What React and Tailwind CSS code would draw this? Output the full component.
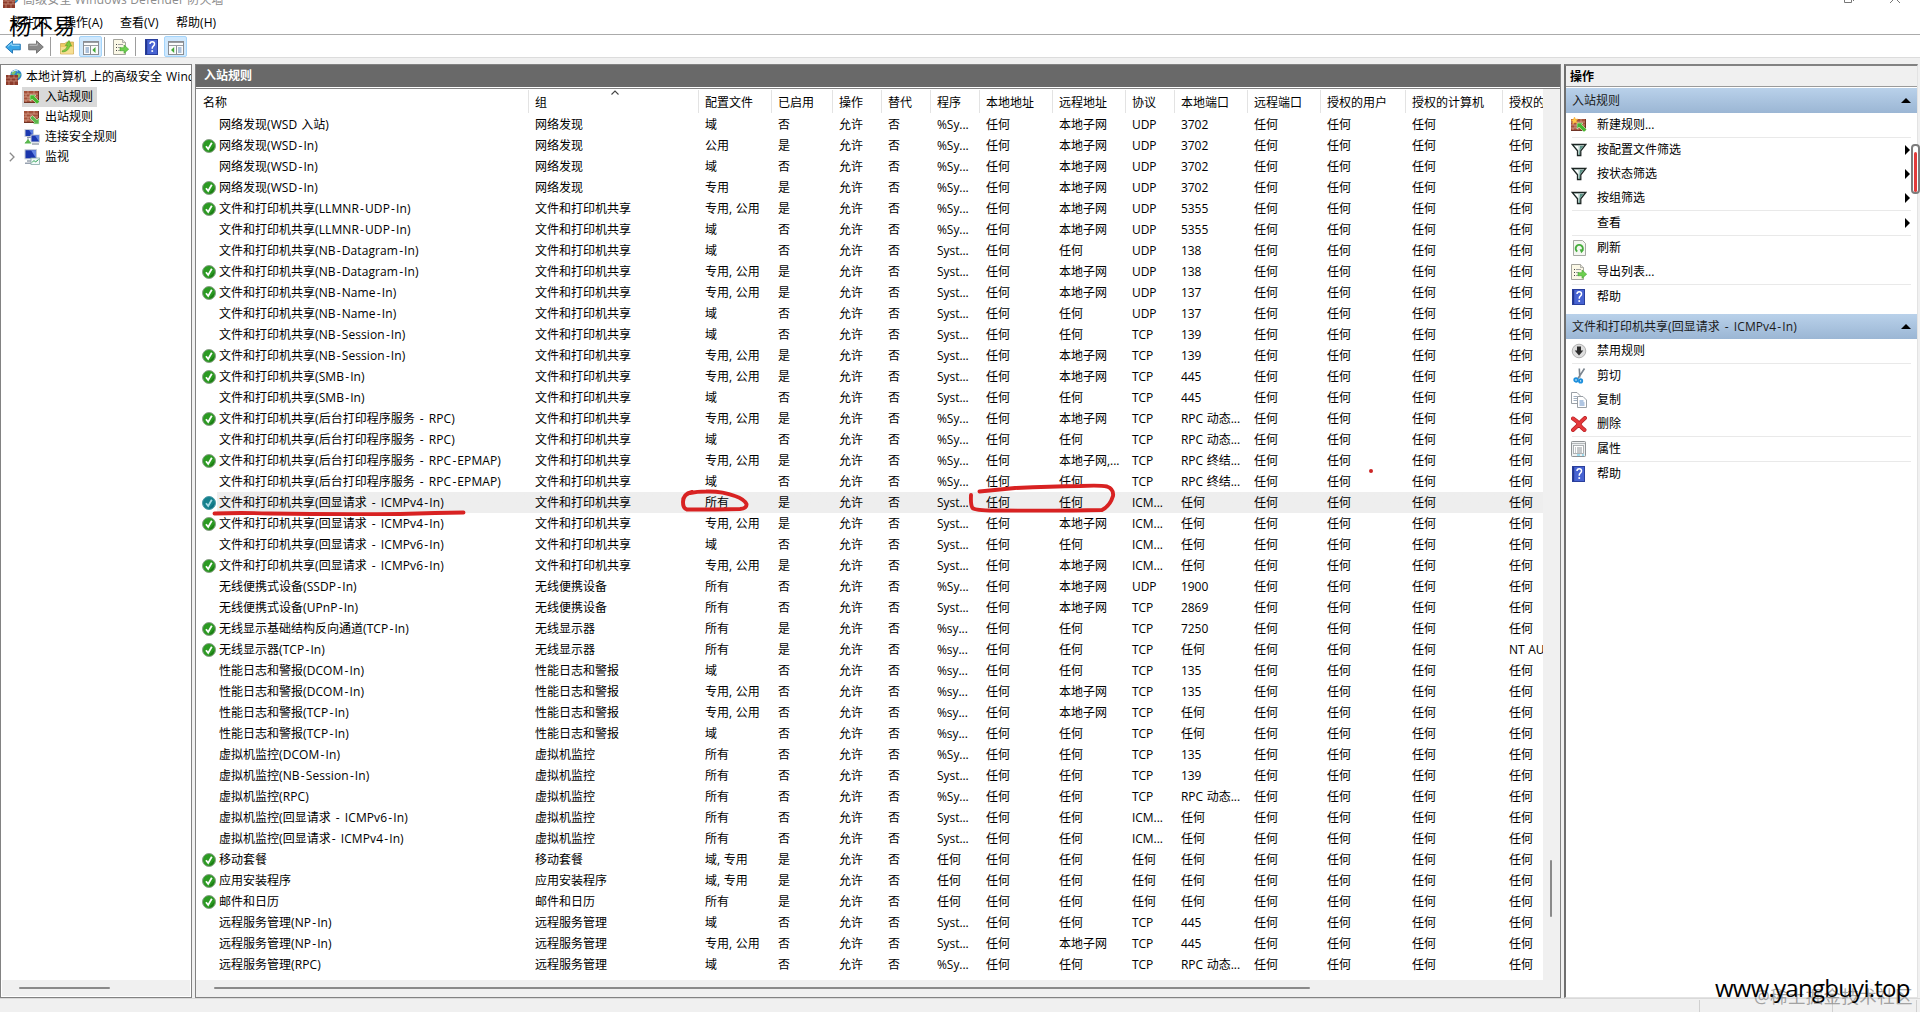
import React from 'react';
import clsx from 'clsx';

const FILES = '文件和打印机共享';
const PERF = '性能日志和警报';
const VM = '虚拟机监控';
const ANY = '任何';
const SUBNET = '本地子网';
const BOTH = '专用, 公用';

// name, group, profile, enabled, program, remote address, protocol, local port, authorized
const RULES = [
  ['网络发现(WSD 入站)', '网络发现', '域', 0, '%Sy...', SUBNET, 'UDP', '3702'],
  ['网络发现(WSD-In)', '网络发现', '公用', 1, '%Sy...', SUBNET, 'UDP', '3702'],
  ['网络发现(WSD-In)', '网络发现', '域', 0, '%Sy...', SUBNET, 'UDP', '3702'],
  ['网络发现(WSD-In)', '网络发现', '专用', 1, '%Sy...', SUBNET, 'UDP', '3702'],
  [`${FILES}(LLMNR-UDP-In)`, FILES, BOTH, 1, '%Sy...', SUBNET, 'UDP', '5355'],
  [`${FILES}(LLMNR-UDP-In)`, FILES, '域', 0, '%Sy...', SUBNET, 'UDP', '5355'],
  [`${FILES}(NB-Datagram-In)`, FILES, '域', 0, 'Syst...', ANY, 'UDP', '138'],
  [`${FILES}(NB-Datagram-In)`, FILES, BOTH, 1, 'Syst...', SUBNET, 'UDP', '138'],
  [`${FILES}(NB-Name-In)`, FILES, BOTH, 1, 'Syst...', SUBNET, 'UDP', '137'],
  [`${FILES}(NB-Name-In)`, FILES, '域', 0, 'Syst...', ANY, 'UDP', '137'],
  [`${FILES}(NB-Session-In)`, FILES, '域', 0, 'Syst...', ANY, 'TCP', '139'],
  [`${FILES}(NB-Session-In)`, FILES, BOTH, 1, 'Syst...', SUBNET, 'TCP', '139'],
  [`${FILES}(SMB-In)`, FILES, BOTH, 1, 'Syst...', SUBNET, 'TCP', '445'],
  [`${FILES}(SMB-In)`, FILES, '域', 0, 'Syst...', ANY, 'TCP', '445'],
  [`${FILES}(后台打印程序服务 - RPC)`, FILES, BOTH, 1, '%Sy...', SUBNET, 'TCP', 'RPC 动态...'],
  [`${FILES}(后台打印程序服务 - RPC)`, FILES, '域', 0, '%Sy...', ANY, 'TCP', 'RPC 动态...'],
  [`${FILES}(后台打印程序服务 - RPC-EPMAP)`, FILES, BOTH, 1, '%Sy...', '本地子网,...', 'TCP', 'RPC 终结...'],
  [`${FILES}(后台打印程序服务 - RPC-EPMAP)`, FILES, '域', 0, '%Sy...', ANY, 'TCP', 'RPC 终结...'],
  [`${FILES}(回显请求 - ICMPv4-In)`, FILES, '所有', 1, 'Syst...', ANY, 'ICM...', ANY],
  [`${FILES}(回显请求 - ICMPv4-In)`, FILES, BOTH, 1, 'Syst...', SUBNET, 'ICM...', ANY],
  [`${FILES}(回显请求 - ICMPv6-In)`, FILES, '域', 0, 'Syst...', ANY, 'ICM...', ANY],
  [`${FILES}(回显请求 - ICMPv6-In)`, FILES, BOTH, 1, 'Syst...', SUBNET, 'ICM...', ANY],
  ['无线便携式设备(SSDP-In)', '无线便携设备', '所有', 0, '%Sy...', SUBNET, 'UDP', '1900'],
  ['无线便携式设备(UPnP-In)', '无线便携设备', '所有', 0, 'Syst...', SUBNET, 'TCP', '2869'],
  ['无线显示基础结构反向通道(TCP-In)', '无线显示器', '所有', 1, '%sy...', ANY, 'TCP', '7250'],
  ['无线显示器(TCP-In)', '无线显示器', '所有', 1, '%sy...', ANY, 'TCP', ANY, 'NT AUTHORITY'],
  [`${PERF}(DCOM-In)`, PERF, '域', 0, '%sy...', ANY, 'TCP', '135'],
  [`${PERF}(DCOM-In)`, PERF, BOTH, 0, '%sy...', SUBNET, 'TCP', '135'],
  [`${PERF}(TCP-In)`, PERF, BOTH, 0, '%sy...', SUBNET, 'TCP', ANY],
  [`${PERF}(TCP-In)`, PERF, '域', 0, '%sy...', ANY, 'TCP', ANY],
  [`${VM}(DCOM-In)`, VM, '所有', 0, '%Sy...', ANY, 'TCP', '135'],
  [`${VM}(NB-Session-In)`, VM, '所有', 0, 'Syst...', ANY, 'TCP', '139'],
  [`${VM}(RPC)`, VM, '所有', 0, '%Sy...', ANY, 'TCP', 'RPC 动态...'],
  [`${VM}(回显请求 - ICMPv6-In)`, VM, '所有', 0, 'Syst...', ANY, 'ICM...', ANY],
  [`${VM}(回显请求- ICMPv4-In)`, VM, '所有', 0, 'Syst...', ANY, 'ICM...', ANY],
  ['移动套餐', '移动套餐', '域, 专用', 1, ANY, ANY, ANY, ANY],
  ['应用安装程序', '应用安装程序', '域, 专用', 1, ANY, ANY, ANY, ANY],
  ['邮件和日历', '邮件和日历', '所有', 1, ANY, ANY, ANY, ANY],
  ['远程服务管理(NP-In)', '远程服务管理', '域', 0, 'Syst...', ANY, 'TCP', '445'],
  ['远程服务管理(NP-In)', '远程服务管理', BOTH, 0, 'Syst...', SUBNET, 'TCP', '445'],
  ['远程服务管理(RPC)', '远程服务管理', '域', 0, '%Sy...', ANY, 'TCP', 'RPC 动态...'],
];
const SELECTED = 18;

const HEADERS = ['名称', '组', '配置文件', '已启用', '操作', '替代', '程序', '本地地址', '远程地址', '协议', '本地端口', '远程端口', '授权的用户', '授权的计算机', '授权的本地主体'];
const GRID = 'grid grid-cols-[332px_170px_73px_61px_49px_49px_49px_73px_73px_49px_73px_73px_85px_97px_40px]';

// Latin runs get their own tracking, and hyphens a bit of air on both sides
function T({ children, wide }) {
  return children.split(/([\x20-\x2c\x2e-\x7e]+|-)/).map((part, i) => {
    if (i % 2 === 0) return part;
    if (part === '-') return <span key={i} className="px-[1.1px]">-</span>;
    return <span key={i} className={wide ? 'tracking-[0.1px] [word-spacing:0.8px]' : 'tracking-[-0.05px] [word-spacing:0.6px]'}>{part}</span>;
  });
}

function Svg({ children, className }) {
  return <svg viewBox="0 0 16 16" className={clsx('block size-4 shrink-0', className)}>{children}</svg>;
}

function CheckIcon({ selected }) {
  return (
    <svg viewBox="0 0 14 14" className="block size-[14px] shrink-0">
      <circle cx="7" cy="7" r="6.5" fill={selected ? '#14808c' : '#2b9a22'} stroke={selected ? '#4c9aa8' : '#8aa088'} strokeWidth="1" />
      <path d="M7 12.6A5.6 5.6 0 0 0 12.4 7Q10 9 7 12.6Z" fill={selected ? '#0c6b80' : '#1c7c14'} />
      <path d="M4 7.2L6.2 10L9.8 3.8" fill="none" stroke={selected ? '#a8dbe6' : '#fff'} strokeWidth="1.8" />
    </svg>
  );
}

function Bricks({ x = 0, y = 2, w = 15, h = 12 }) {
  return (
    <>
      <rect x={x} y={y} width={w} height={h} fill="#a4513a" />
      <path d={`M${x} ${y + 3}h${w}M${x} ${y + 6}h${w}M${x} ${y + 9}h${w}M${x + 4} ${y}v3M${x + 10} ${y}v3M${x + 2} ${y + 3}v3M${x + 7} ${y + 3}v3M${x + 4} ${y + 6}v3M${x + 10} ${y + 6}v3M${x + 2} ${y + 9}v3M${x + 7} ${y + 9}v3`} stroke="#d9a692" strokeWidth="0.7" />
      <path d={`M${x} ${y + h - 0.5}h${w}M${x + w - 0.5} ${y}v${h}`} stroke="#6f3426" />
    </>
  );
}

function FirewallIcon() {
  return (
    <Svg>
      <circle cx="10" cy="6" r="5.6" fill="#2d86c8" />
      <path d="M7 2Q9 1 10 3L8 6L5 5ZM11 4L15 5L13 9L11 8Z" fill="#7cc46a" />
      <path d="M6 3Q9 0 12 2" stroke="#d4efff" fill="none" />
      <rect y="6" width="12" height="10" fill="#8d3b2b" />
      <path d="M0 9h12M0 12h12M3 6v3M8 6v3M5 9v3M10 9v3M3 12v4M8 12v4" stroke="#cf9582" strokeWidth="0.7" />
    </Svg>
  );
}

function InboundIcon({ fresh }) {
  return (
    <Svg>
      <Bricks />
      <path d="M6 6H12L10.500 7.500L15.500 12.500L13 15L8 10L6 12Z" fill="#45b931" stroke="#d6f5cd" strokeWidth="0.6" />
      {fresh && <path d="M3.500 0L4.500 2.300L7 2L5.300 4L6.500 6.300L4 5.500L1.800 7L2 4.500L0 3L2.500 2.300Z" fill="#ffc94a" stroke="#f49b20" strokeWidth="0.4" />}
    </Svg>
  );
}

function OutboundIcon() {
  return (
    <Svg>
      <Bricks />
      <path d="M15 15H9L10.500 13.500L6 9L8.500 6.500L13 11L15 9Z" fill="#5cb84c" stroke="#dff5d8" strokeWidth="0.6" />
    </Svg>
  );
}

function ConnectionIcon() {
  return (
    <Svg>
      <rect x="1" y="0.500" width="8.500" height="7" fill="#1c39b0" stroke="#c4cbd6" />
      <path d="M5 1h4v6Z" fill="#5b7ee0" />
      <path d="M3 8.500h5M1 13.500h6M4 9v4" stroke="#8d98a6" />
      <path d="M0.500 14.500L4 10L7.500 14.500Z" fill="#58b84c" />
      <rect x="7" y="6" width="8.500" height="7" fill="#1c39b0" stroke="#c4cbd6" />
      <path d="M11 6.500h4v6Z" fill="#5b7ee0" />
      <path d="M8 15h7" stroke="#9aa3ae" strokeWidth="1.500" />
    </Svg>
  );
}

function MonitorIcon() {
  return (
    <Svg>
      <rect x="1" y="0.800" width="11.500" height="9" fill="#1b36ac" stroke="#c0c8d4" />
      <path d="M7 1.300h5v8Z" fill="#6687e4" />
      <path d="M3 12h7M1 14.300h7" stroke="#98a2b0" strokeWidth="1.400" />
      <rect x="7" y="9" width="8.500" height="6.500" fill="#f2faf9" stroke="#86a9a6" strokeWidth="0.8" />
      <path d="M8 13.500L10 11.500L11.500 13L14.500 10.500" fill="none" stroke="#28a04c" />
    </Svg>
  );
}

function BackIcon() {
  return <Svg><path d="M0.700 8L7.500 1.800V5.200H15.300V10.800H7.500V14.200Z" fill="#38a5e6" stroke="#1b6fb0" strokeWidth="0.9" /><path d="M2.800 7.500L6.800 4V6.300H14.500" fill="none" stroke="#9fdcfa" /></Svg>;
}

function ForwardIcon() {
  return <Svg><path d="M15.300 8L8.500 1.800V5.200H0.700V10.800H8.500V14.200Z" fill="#8b8b8b" stroke="#6b6b6b" strokeWidth="0.9" /><path d="M1.500 6.300H9.300V4.200" fill="none" stroke="#bcbcbc" /></Svg>;
}

function FolderUpIcon() {
  return (
    <Svg>
      <path d="M1.500 4.500H6L7.500 3H14.500V15H1.500Z" fill="#ecc964" stroke="#c9a24a" strokeWidth="0.7" />
      <path d="M1.800 8H14.200V14.700H1.800Z" fill="#f6df92" />
      <path d="M3 12Q7.500 11 8.500 6.500H6.300L10 1.500L12.500 7H10.800Q9.500 12.500 3.500 13Z" fill="#7ccb3c" stroke="#4f9c26" strokeWidth="0.6" />
    </Svg>
  );
}

// console tree toggle has the narrow list on the left, the action pane toggle on the right
function PaneIcon({ flip }) {
  return (
    <Svg>
      <g transform={flip ? 'translate(16 0) scale(-1 1)' : undefined}>
        <rect x="0.500" y="2.500" width="15" height="13" fill="#fbfbfb" stroke="#8a8d92" />
        <path d="M1 3.500H15M1 6.500H15" stroke="#9b9ea3" />
        <path d="M7.500 7V15" stroke="#8a8d92" />
        <path d="M2.500 9H6M2.500 11H6M2.500 13H6" stroke="#5f87b8" />
        <path d={flip ? 'M13 11L9.800 8V14Z' : 'M9.300 11L12.500 8V14Z'} fill="#42aa35" />
      </g>
    </Svg>
  );
}

function ExportIcon() {
  return (
    <Svg>
      <path d="M0.500 0.500H9.500L12.500 3.500V15.500H0.500Z" fill="#fbf8e6" stroke="#9a9a92" strokeWidth="0.9" />
      <path d="M9.500 0.500V3.500H12.500" fill="#e3e3da" stroke="#9a9a92" strokeWidth="0.7" />
      <path d="M3 5.500h1M3 8.500h1M3 11.500h1" stroke="#444" />
      <path d="M5 5.500H10M5 8.500H8M5 11.500H8" stroke="#a0a0a0" />
      <path d="M7 8.700H11V6L15.700 10.200L11 14.400V11.700H7Z" fill="#6ed050" stroke="#42a62f" strokeWidth="0.6" />
    </Svg>
  );
}

function HelpIcon() {
  return (
    <Svg>
      <rect x="1.500" y="0.500" width="12" height="15" fill="#4763d2" stroke="#2a3f9c" />
      <path d="M2.500 1V15" stroke="#22368f" strokeWidth="1.400" />
      <path d="M6 5Q6 2.800 8.300 2.800T10.500 5Q10.500 6.300 9.300 7.200Q8.200 8 8.200 9.800" fill="none" stroke="#fff" strokeWidth="1.500" />
      <rect x="7.400" y="11.200" width="1.700" height="1.700" fill="#fff" />
    </Svg>
  );
}

function FilterIcon() {
  return (
    <Svg>
      <path d="M1.200 2.500H14.800L9.800 8.800V13.500H6.500V8.800Z" fill="#cfe3de" stroke="#1d2624" strokeWidth="1.300" />
      <path d="M9 4H12.500L9 8.500V13H8Z" fill="#5c9488" />
      <path d="M3.800 4H7L7.500 8Z" fill="#fff" />
    </Svg>
  );
}

function RefreshIcon() {
  return (
    <Svg>
      <path d="M2.500 0.500H11.500L14.500 3.500V15.500H2.500Z" fill="#f4f7f1" stroke="#9c9f9a" strokeWidth="0.9" />
      <path d="M6.300 11.500A3.600 3.600 0 1 1 10.800 11" fill="none" stroke="#45ad3c" strokeWidth="1.900" />
      <path d="M8.600 9.300L13 9.800L10.300 13.300Z" fill="#45ad3c" />
    </Svg>
  );
}

function DisableIcon() {
  return (
    <Svg>
      <circle cx="8" cy="8" r="6.800" fill="#dedede" stroke="#a3a3a3" strokeWidth="0.8" />
      <path d="M6 3.500H10V7.500H12.300L8 12.500L3.700 7.500H6Z" fill="#2c2c2c" />
    </Svg>
  );
}

function CutIcon() {
  return (
    <Svg>
      <path d="M13.500 0.500L7 10.500M8.300 0.500L8.800 9.500" stroke="#7b858f" strokeWidth="1.600" />
      <circle cx="5" cy="12" r="1.700" fill="none" stroke="#1c8fdc" strokeWidth="1.900" />
      <circle cx="9.600" cy="12.900" r="1.600" fill="none" stroke="#1c8fdc" strokeWidth="1.900" />
    </Svg>
  );
}

function CopyIcon() {
  return (
    <Svg>
      <path d="M0.500 0.500H6L9 3.500V11.500H0.500Z" fill="#fff" stroke="#8f959c" strokeWidth="0.9" />
      <path d="M2.500 4.500H6M2.500 6.500H6M2.500 8.500H6" stroke="#8a9cb0" strokeWidth="0.8" />
      <path d="M6.500 4.500H12L15.500 8V15.500H6.500Z" fill="#fff" stroke="#8f959c" strokeWidth="0.9" />
      <path d="M8.500 9H12.500M8.500 11H13.500M8.500 13H13.500" stroke="#4f7fbe" strokeWidth="0.9" />
    </Svg>
  );
}

function DeleteIcon() {
  return (
    <Svg>
      <path d="M2 2.500Q6 5 8 8Q10.500 12 13.500 14M14 2Q10 5.500 8 8T2 14" fill="none" stroke="#b31e22" strokeWidth="4" strokeLinecap="round" />
      <path d="M2 2.500Q6 5 8 8Q10.500 12 13.500 14M14 2Q10 5.500 8 8T2 14" fill="none" stroke="#e5393c" strokeWidth="2.800" strokeLinecap="round" />
    </Svg>
  );
}

function PropsIcon() {
  return (
    <Svg>
      <rect x="0.500" y="0.500" width="14" height="15" rx="0.800" fill="#eef0f1" stroke="#8e9294" />
      <path d="M1 2.500H14" stroke="#b4b8ba" />
      <rect x="2.500" y="4.500" width="10" height="8" fill="#fff" stroke="#9ca1a4" strokeWidth="0.8" />
      <path d="M4 7h1M4 9h1M4 11h1M6 7H11M6 9H11M6 11H11" stroke="#7f868b" strokeWidth="0.9" />
      <path d="M6 14H9M11 14H13" stroke="#4fc4e8" />
    </Svg>
  );
}

function ToolSep({ className }) {
  return <div className={clsx('h-[19px] w-px shrink-0 bg-[#9d9d9d]', className)} />;
}

function TreeRow({ icon, label, active, expander }) {
  return (
    <div className="flex h-5 items-center">
      <div className="flex w-[21px] shrink-0 justify-center pl-px">
        {expander && (
          <svg viewBox="0 0 6 10" className="h-[10px] w-[6px]"><path d="M0.800 0.800L5 5L0.800 9.200" fill="none" stroke="#8a8a8a" strokeWidth="1.300" /></svg>
        )}
      </div>
      <div className={clsx('flex h-5 items-center gap-[5px] pl-[2px] pr-[4px]', active && 'bg-[#d9d9d9]')}>
        {icon}
        <span>{label}</span>
      </div>
    </div>
  );
}

function ActionHeader({ label }) {
  return (
    <div className="flex h-[25px] items-center justify-between bg-linear-to-b from-[#b9d1ea] to-[#9bb6d4] pl-[6px] pr-[6px] text-[#1b1b1b]">
      <span><T wide>{label}</T></span>
      <svg viewBox="0 0 10 5" className="h-[5px] w-[10px]"><path d="M5 0L10 5H0Z" fill="#000" /></svg>
    </div>
  );
}

function Action({ icon, label, arrow, line }) {
  return (
    <>
      <div className="flex h-6 items-center pl-[5px] pr-[7px]">
        <div className="w-[26px] shrink-0">{icon}</div>
        <span className="flex-1"><T>{label}</T></span>
        {arrow && <svg viewBox="0 0 5 10" className="h-[10px] w-[5px]"><path d="M0 0L5 5L0 10Z" fill="#000" /></svg>}
      </div>
      {line && <div className="ml-[6px] mr-[6px] h-px bg-[#e9e9e9]" />}
    </>
  );
}

function RuleRow({ rule, selected }) {
  const [name, group, profile, enabled, program, remote, proto, port, who] = rule;
  const cells = [group, profile, enabled ? '是' : '否', '允许', '否', program, ANY, remote, proto, port, ANY, ANY, ANY, who || ANY];
  return (
    <div className={clsx('h-[21px] items-center', GRID, selected && 'bg-linear-to-r from-transparent from-[20px] to-[#eeeeee] to-[20px]')}>
      <div className="flex items-center gap-[3px] pl-[5px]">
        <div className="w-[14px]">{enabled ? <CheckIcon selected={selected} /> : null}</div>
        <span className="whitespace-nowrap"><T wide>{name}</T></span>
      </div>
      {cells.map((c, i) => (
        <div key={i} className="overflow-hidden whitespace-nowrap pl-[6px]"><T>{c}</T></div>
      ))}
    </div>
  );
}

export default function App() {
  return (
    <div className="relative flex h-[1012px] w-[1920px] flex-col overflow-hidden bg-[#f0f0f0] font-['Open_Sans','Noto_Sans_CJK_SC',sans-serif] text-[12px] leading-[20px] text-black">
      {/* window caption, partly off screen */}
      <div className="flex h-3 shrink-0 items-start justify-between overflow-hidden bg-white">
        <div className="-mt-[10px] flex items-center gap-[4px] pl-[3px] text-[#8c8c8c]">
          <FirewallIcon />
          <span className="leading-[20px] tracking-[0.15px]">高级安全 Windows Defender 防火墙</span>
        </div>
        <div className="-mt-[7px] mr-[20px] flex gap-[36px]">
          <svg viewBox="0 0 10 10" className="size-[10px]"><path d="M0.500 2.500H7.500V9.500H0.500ZM2.500 0.500H9.500V8" fill="none" stroke="#777" /></svg>
          <svg viewBox="0 0 10 10" className="size-[10px]"><path d="M0 0L10 10M10 0L0 10" fill="none" stroke="#777" /></svg>
        </div>
      </div>

      <div className="flex h-[22px] shrink-0 items-center gap-4 bg-white pl-[10px]">
        <span className="w-[38px] whitespace-nowrap"><T wide>文件(F)</T></span>
        <span className="w-10 whitespace-nowrap"><T wide>操作(A)</T></span>
        <span className="w-10 whitespace-nowrap"><T wide>查看(V)</T></span>
        <span className="whitespace-nowrap"><T wide>帮助(H)</T></span>
      </div>

      <div className="flex h-6 shrink-0 items-center border-y border-t-[#ababab] border-b-[#dcdcdc] bg-white pl-[5px] pt-px">
        <BackIcon />
        <div className="ml-[7px]"><ForwardIcon /></div>
        <ToolSep className="ml-[6px]" />
        <div className="ml-[8px]"><FolderUpIcon /></div>
        <div className="ml-[4px] flex h-[21px] w-[23px] items-center justify-center rounded-[2px] border border-[#a5d5fb] bg-[#cfe8fd]"><PaneIcon flip={false} /></div>
        <ToolSep className="ml-[2px]" />
        <div className="ml-[8px]"><ExportIcon /></div>
        <ToolSep className="ml-[6px]" />
        <div className="ml-[8px]"><HelpIcon /></div>
        <div className="ml-[4px] flex h-[21px] w-[23px] items-center justify-center rounded-[2px] border border-[#a5d5fb] bg-[#cfe8fd]"><PaneIcon flip /></div>
      </div>

      <div className="flex h-[940px] shrink-0 gap-[3px] pt-[6px]">
        {/* console tree */}
        <div className="flex w-[192px] shrink-0 flex-col border border-[#828282] bg-white">
          <div className="flex-1 overflow-hidden pt-[2px]">
            <div className="flex h-5 items-center gap-[4px] pl-[5px]">
              <FirewallIcon />
              <span className="flex-1 overflow-hidden whitespace-nowrap"><T wide>本地计算机 上的高级安全 Windows Defender</T></span>
            </div>
            <TreeRow icon={<InboundIcon />} label="入站规则" active />
            <TreeRow icon={<OutboundIcon />} label="出站规则" />
            <TreeRow icon={<ConnectionIcon />} label="连接安全规则" />
            <TreeRow icon={<MonitorIcon />} label="监视" expander />
          </div>
          <div className="mx-px mb-px flex h-4 items-center bg-[#f0f0f0] pl-[17px]">
            <div className="h-[2px] w-[91px] rounded bg-[#8a8a8a]" />
          </div>
        </div>

        {/* rule list */}
        <div className="flex w-[1366px] shrink-0 flex-col border border-[#828282] bg-white">
          <div className="h-[22px] shrink-0 bg-[#696969] pl-[8px] font-bold leading-[22px] text-white">入站规则</div>
          <div className="mt-px flex flex-1 overflow-hidden border-t border-[#828282] pl-px">
            <div className="flex w-[1346px] shrink-0 flex-col overflow-hidden">
              <div className="relative h-[25px]">
                <div className={clsx('h-[25px]', GRID)}>
                  {HEADERS.map((h, i) => (
                    <div key={i} className={clsx('mt-px h-[23px] overflow-hidden whitespace-nowrap pl-[6px] leading-[25px]', i < 14 && 'border-r border-[#e3e3e3]')}>{h}</div>
                  ))}
                </div>
                <svg viewBox="0 0 8 5" className="absolute left-[414px] top-px h-[5px] w-[8px]"><path d="M0.500 4.500L4 1L7.500 4.500" fill="none" stroke="#444" strokeWidth="1.100" /></svg>
              </div>
              {RULES.map((r, i) => <RuleRow key={i} rule={r} selected={i === SELECTED} />)}
              <div className="flex-1" />
            </div>
            <div className="flex flex-1 justify-center bg-[#f0f0f0] pr-[2px] pt-[771px]">
              <div className="h-[57px] w-[2px] rounded bg-[#8a8a8a]" />
            </div>
          </div>
          <div className="flex h-[17px] shrink-0 items-center bg-[#f0f0f0] pb-px pl-[18px]">
            <div className="h-[2px] w-[1096px] rounded bg-[#8a8a8a]" />
          </div>
        </div>

        {/* actions */}
        <div className="flex w-[354px] shrink-0 flex-col border border-l-2 border-[#828282] border-b-[#e3e3e3] border-r-[#e3e3e3] border-t-2 border-l-[#6f6f6f] bg-white">
          <div className="h-[20px] shrink-0 bg-[#f0f0f0] pl-[4px] font-bold leading-[22px]">操作</div>
          <div className="mb-px h-px shrink-0 bg-[#9a9a9a]" />
          <ActionHeader label="入站规则" />
          <Action icon={<InboundIcon fresh />} label="新建规则..." line />
          <Action icon={<FilterIcon />} label="按配置文件筛选" arrow />
          <Action icon={<FilterIcon />} label="按状态筛选" arrow />
          <Action icon={<FilterIcon />} label="按组筛选" arrow line />
          <Action label="查看" arrow line />
          <Action icon={<RefreshIcon />} label="刷新" />
          <Action icon={<ExportIcon />} label="导出列表..." line />
          <Action icon={<HelpIcon />} label="帮助" />
          <div className="h-[5px]" />
          <ActionHeader label="文件和打印机共享(回显请求 - ICMPv4-In)" />
          <Action icon={<DisableIcon />} label="禁用规则" line />
          <Action icon={<CutIcon />} label="剪切" />
          <Action icon={<CopyIcon />} label="复制" />
          <Action icon={<DeleteIcon />} label="删除" line />
          <Action icon={<PropsIcon />} label="属性" line />
          <Action icon={<HelpIcon />} label="帮助" />
        </div>
      </div>

      {/* status bar */}
      <div className="flex flex-1 justify-end border-t border-[#d9d9d9] pt-px">
        <div className="w-[133px] border-l border-[#d0d0d0]" />
        <div className="w-[85px] border-x border-[#d0d0d0]" />
        <div className="w-[3px]" />
      </div>

      {/* pen marks over the list */}
      <svg viewBox="0 0 1920 1012" className="pointer-events-none absolute inset-0 h-[1012px] w-[1920px]" fill="none" stroke="#d82222" strokeWidth="3.900" strokeLinecap="round" strokeLinejoin="round">
        <path d="M214.500 513.500Q240 512.500 270 513.500Q330 514.500 400 514L435 513L463.500 512.500" />
        <path d="M692 492Q683 494 683 502Q683 508.500 687 509.500Q715 509.500 740 509Q747 508.500 746.500 504Q744 499 735 496Q722 491 706 491.500Q697 491.500 690 493" />
        <path d="M979.500 491.500Q995 490 1015 488Q1050 486.500 1080 486Q1100 485 1107 486.500Q1114 489 1113 496Q1110 506 1102 510Q1060 511 1000 510.500Q976 511 972.500 508Q970.500 505 971 495" />
        <circle cx="1371" cy="471" r="2" fill="#cc2525" stroke="none" />
      </svg>

      <div className="absolute left-[1911px] top-[144px] h-[50px] w-[9px] rounded-[4px] border-2 border-[#7c7c7c] bg-white px-px pt-[6px]">
        <div className="h-[40px] w-[3px] rounded bg-[#e23b3b]" />
      </div>

      <div className="absolute left-[9px] top-[10px] whitespace-nowrap text-[22px] leading-[30px]">杨不易</div>
      <div className="absolute left-[1754px] top-[984px] whitespace-nowrap text-[17.500px] leading-[24px] tracking-[0.350px] text-[#8e8e8e]/80">@稀土掘金技术社区</div>
      <div className="absolute left-[1715px] top-[972px] whitespace-nowrap text-[24px] leading-[32px] tracking-[-0.750px]">www.yangbuyi.top</div>
    </div>
  );
}
